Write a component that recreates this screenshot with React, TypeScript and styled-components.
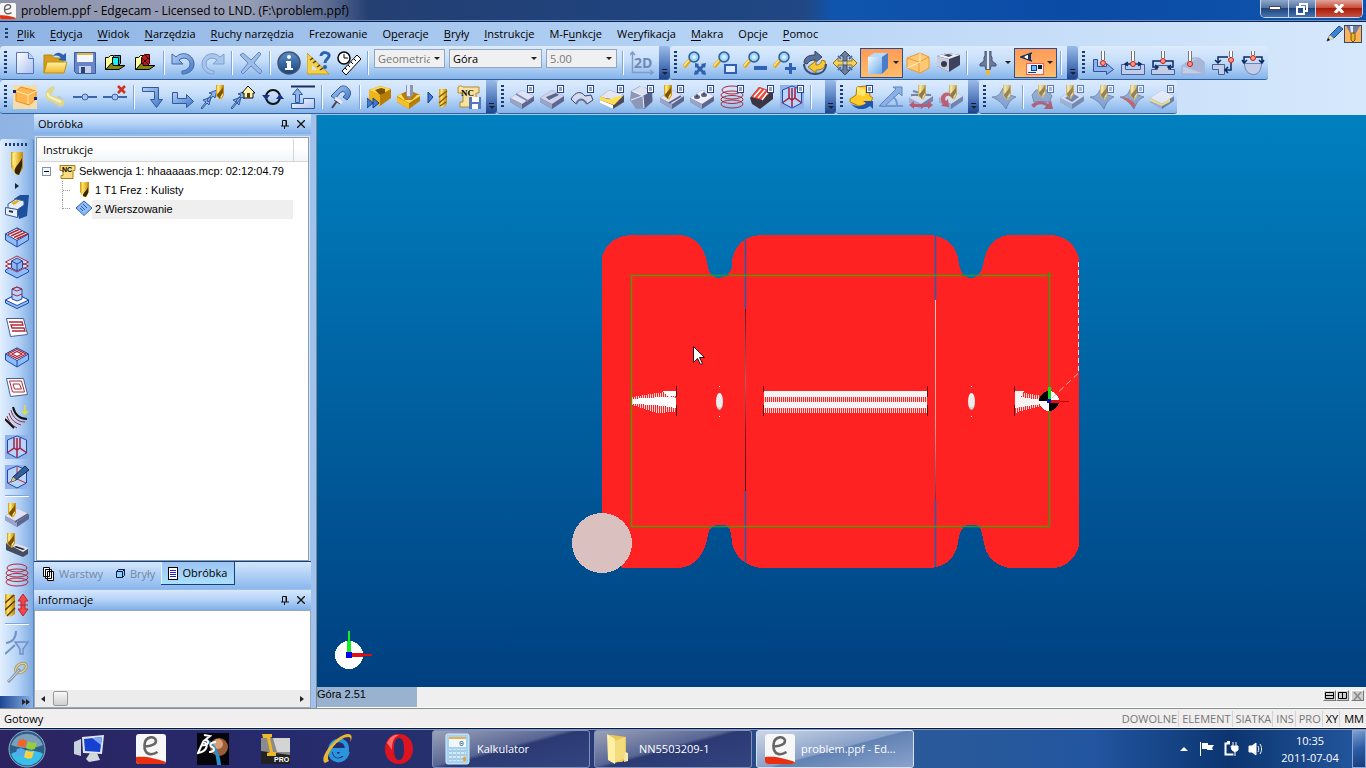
import React from 'react';
import styled, { createGlobalStyle } from 'styled-components';

const ui = `"Open Sans", "Noto Sans", sans-serif`;
const navy = '#17407c';

const GlobalStyle = createGlobalStyle`
  *, *::before, *::after { box-sizing: border-box; }
  body { margin: 0; font-family: ${ui}; font-size: 11px; line-height: 16px; color: #000; }
  button, select { font: inherit; color: inherit; margin: 0; padding: 0; border: 0; background: none; }
  ul { list-style: none; margin: 0; padding: 0; }
  h1, h2 { margin: 0; font: inherit; }
  svg { display: block; flex: none; }
`;

/* ---------- icon parts ---------- */

const Badge = () => (
  <g>
    <rect x="17.5" y=".5" width="6" height="7" fill="#fff" stroke="#24418c" />
    <path d="M19 3h3M19 5h3" stroke="#24418c" />
  </g>
);

const Drill = ({ x = 0, y = 0 }: { x?: number; y?: number }) => (
  <g transform={`translate(${x} ${y})`}>
    <path d="M0 0h8v10l-3 5-5-4z" fill="url(#gold)" />
    <path d="M1 11c0-4 5-5 6-10v6c-1 3-3 4-3 7z" fill="#7a5206" />
    <path d="M2 1v7M5 12l2-3" stroke="#fff0a0" />
  </g>
);

const Slab = ({ top = '#dfe2f2' }: { top?: string }) => (
  <g>
    <path d="M0 13L12 5l12 6v5l-12 8-12-7z" fill="#5c6690" />
    <path d="M0 13L12 5l12 6-12 8z" fill={top} />
    <path d="M0 13l12 6v5l-12-7z" fill="#9aa3c8" />
  </g>
);

const Probe = ({ x = 12, y = 13 }: { x?: number; y?: number }) => (
  <g>
    <path d={`M${x} 0V${y - 3}`} stroke="#fff" strokeWidth="2" />
    <path d={`M${x - 1.5} 0V${y - 3}M${x + 1.5} 0V${y - 3}`} stroke="#777" />
    <circle cx={x} cy={y} r="2.5" fill="#ff9a80" stroke="#c81818" />
  </g>
);

const Lens = () => (
  <g>
    <path d="M1 16l6-7" stroke="#e0a818" strokeWidth="4" />
    <path d="M1 15l5-6" stroke="#ffe88a" strokeWidth="1.5" />
    <circle cx="11" cy="6" r="5" fill="url(#lens)" stroke="#2c5fa0" strokeWidth="1.5" />
  </g>
);

const Iso = ({ fill = '#fff' }: { fill?: string }) => (
  <g stroke="#1f49a8">
    <path d="M.5 9L12 3l11.500 6v6L12 22 .5 15z" fill="#8fbcf6" />
    <path d="M.5 9L12 3l11.500 6L12 15.500z" fill={fill} />
    <path d="M12 15.500V22" />
  </g>
);

const CubeCorner = () => (
  <g>
    <rect width="24" height="24" fill="#8fb2ec" />
    <path d="M2.500 5L12 1l9.500 4v13L12 23l-9.500-5z" fill="#b9d3fa" stroke="#1f49a8" />
  </g>
);

const Coil = () => (
  <g fill="none" stroke="#b02838">
    <ellipse cx="12" cy="5" rx="10" ry="4" /><ellipse cx="12" cy="10" rx="11" ry="4" />
    <ellipse cx="12" cy="14.500" rx="11" ry="4" /><ellipse cx="12" cy="19" rx="11" ry="4" />
  </g>
);

const icons: Record<string, React.ReactNode> = {
  new: <><path d="M3.500 1.500h12l5 6v15h-17z" fill="url(#page)" stroke="#5674bd" /><path d="M15.500 1.500v6h5" fill="#c3d5f7" stroke="#5674bd" /></>,
  open: <><path d="M1 22V4h8l2 3h9v4" fill="#d59d20" stroke="#b8860b" /><path d="M4 11h20l-3 11H1z" fill="url(#folder)" stroke="#c08f14" /><path d="M10 5c4-5 8-3 10-1l3-2v8l-8-1 3-2c-2-3-5-3-8-2z" fill="#2e5fa8" /></>,
  save: <><path d="M1.500 1.500h21v21h-19l-2-2z" fill="#6785c9" stroke="#3c59a0" /><path d="M4 2h16v9H4z" fill="#f1f6ff" /><path d="M4 2h16v2H4z" fill="#e9b832" /><path d="M6 15h12v7H6z" fill="#c7d0e4" /><path d="M8 16h4v6H8z" fill="#2b437f" /></>,
  import: <><path d="M2.500 18.500v-12h3l2-2h3v12z" fill="#ffff9c" stroke="#000" /><path d="M9.500 6.500l2-2h6v8l-2 2h-6z" fill="#20b0b4" stroke="#000" /><path d="M9.500 6.500h6v8h-6z" fill="#20f0f4" stroke="#000" /><path d="M3 18.500l5-6h2v2h12l-6 4z" fill="#8a8a10" stroke="#000" /></>,
  importRed: <><path d="M2.500 18.500v-12h3l2-2h3v12z" fill="#ffff9c" stroke="#000" /><path d="M8.500 6.500l3-3h5v9l-2 2h-6z" fill="#c01824" stroke="#300" /><path d="M9 7l6 6m0-6l-6 6M12 4l4 4" stroke="#300" /><path d="M3 18.500l5-6h2v2h12l-6 4z" fill="#8a8a10" stroke="#000" /></>,
  undo: <path d="M1 3v10h11L8 9c5-4 11-1 11 4 0 4-4 7-8 7v3c7 0 12-4 12-10C23 4 12-1 5 6z" fill="url(#steel)" stroke="#3f66a8" />,
  redo: <path d="M23 3v10H12l4-4C11 5 5 8 5 13c0 4 4 7 8 7v3C6 23 1 19 1 13 1 4 12-1 19 6z" fill="#a9c5ec" stroke="#7c9fd2" />,
  del: <path d="M1 4l3-2 8 7 8-8 2 2-7 9 8 8-2 3-9-8-8 8-2-2 7-9z" fill="#9ebce8" stroke="#6488bf" />,
  info: <><circle cx="12" cy="12" r="11" fill="url(#info)" stroke="#44546e" strokeWidth="1.500" /><circle cx="12" cy="6" r="2" fill="#fff" /><path d="M9 10h5v7h2v2H8v-2h2v-5H9z" fill="#fff" /></>,
  measureHelp: <><path d="M0 2l22 21H0z" fill="#f4cf4a" stroke="#c9971c" /><path d="M5 14v5h5z" fill="#d2e6fd" /><path d="M3 9l3-2m0 5l3-2m1 6l3-2m0 5l3-2" stroke="#4a3a10" strokeWidth="1.500" /><path d="M14 5c0-5 9-4 8 0-.5 3-4 3-4 7" fill="none" stroke="#2b62b0" strokeWidth="3" /><circle cx="18" cy="16" r="2" fill="#2b62b0" /></>,
  timer: <><path d="M5 20L20 4l4 4L9 24z" fill="#fff" stroke="#000" /><path d="M8 17l2 2m1-5l2 2m1-5l2 2m1-5l2 2" stroke="#000" /><circle cx="7" cy="7" r="6" fill="#fff" stroke="#000" strokeWidth="1.500" /><path d="M7 3v4h4" fill="none" stroke="#000" /></>,
  twoD: <><path d="M2.500 1v20.500H23M0 4l2.500-3L5 4M20 19l3 2.500-3 2.500" fill="none" stroke="#7f9cc9" strokeWidth="1.500" /><text x="4" y="17" fontSize="14" fontWeight="700" fontFamily="Open Sans" fill="#6f88b5">2D</text></>,
  zoomFit: <><Lens /><path d="M12 12l4 1-1 1 2 2 2-2-1-1 5-1-1 5-1-1-2 2 2 2 1-1 1 5-5-1 1-1-2-2-2 2 1 1-5 1 1-5 1 1 2-2-2-2-1 1z" fill="#2f5fae" /></>,
  zoomBox: <><Lens /><rect x="12" y="14" width="11" height="8" fill="#dfeaff" stroke="#2f5fae" strokeWidth="2" /></>,
  zoomOut: <><Lens /><rect x="11" y="15" width="13" height="4" fill="#2f62b4" /></>,
  zoomIn: <><Lens /><path d="M16 12h3v4h4v3h-4v4h-3v-4h-4v-3h4z" fill="#2f62b4" /></>,
  rotate: <><path d="M1 12C1 6 6 4 12 4V0l7 6-7 6V9c-4 0-6 1-8 4z" fill="#5b7096" stroke="#34435f" /><path d="M22 10c2 7-4 9-9 9v3l-8-6 8-6v4c4 0 5-2 6-5z" fill="#f6c838" stroke="#a67a10" /><path d="M1 13c0 6 5 10 11 10 7 0 11-4 11-10" fill="none" stroke="#3c4d70" strokeWidth="2" /></>,
  pan: <><path d="M12 0l5 5h-3v5h-4V5H7zM12 24l5-5h-3v-5h-4v5H7z" fill="#6e7f9e" stroke="#3d4a66" /><path d="M0 12l5-5v3h5v4H5v3zM24 12l-5-5v3h-5v4h5v3z" fill="#f6d15a" stroke="#8d7120" /><path d="M5 5l3 3M19 5l-3 3M5 19l3-3M19 19l-3-3" stroke="#4c6aa0" strokeWidth="2" /></>,
  cube: <><path d="M2 6l6-4h14l-6 4z" fill="#b4dcff" /><path d="M2 6h14v17H2z" fill="url(#cubeFace)" /><path d="M16 6l6-4v15l-6 6z" fill="#4a7ccc" /></>,
  wire: <><path d="M1 7l13-5 9 4v11l-9 5L1 17z" fill="#ffc874" stroke="#eb9a2c" /><path d="M1 7l12 4 10-5M13 11v11" fill="none" stroke="#ee9c30" /><path d="M14 2v9L1 17" fill="none" stroke="#fff0c8" /></>,
  solid: <><path d="M1 5l10-3 13 2v10l-11 7L1 15z" fill="#3c435c" /><path d="M1 5l10-3 13 2-11 4z" fill="#eef0f8" /><path d="M1 5l12 3v13L1 15z" fill="#c8cde0" /><circle cx="8" cy="13" r="3" fill="#333a50" /><path d="M7 4l5-1 5 1-4 2z" fill="#41485f" /></>,
  spindle: <><path d="M9 0h6v5l1 1v4l4 3v2h-5l-1 4h-4l-1-4H4v-2l4-3V6l1-1z" fill="#6b7a99" stroke="#465474" /><path d="M11 0h2v18h-2z" fill="#dfe6f4" /><path d="M10 19h4v5h-4z" fill="#e9b93c" /></>,
  view: <><path d="M12 2L1 6l11 4" fill="none" stroke="#17315f" strokeWidth="1.500" /><path d="M8 3.500l3-1v7l-3-1z" fill="#17315f" /><path d="M5 5l3-1v4L5 7z" fill="#fff" /><rect x="6.500" y="12.500" width="17" height="11" fill="#e7f3ff" stroke="#ff5a48" /><rect x="11.500" y="14.500" width="5" height="5" fill="#76b7ff" stroke="#1c3a7c" /><rect x="18" y="14" width="4" height="4" fill="#10182c" /><path d="M8 21.500h8" stroke="#1c3a7c" /></>,
  probeL: <><path d="M2.500 8.500h4v7h9v-3l7 6-7 5v-3h-13z" fill="#8fb2e8" stroke="#2b529a" /><Probe x={12} y={12} /></>,
  probePocket: <><path d="M.5 13.500h4v5h15v-5h4v10H.5z" fill="#c3cde8" stroke="#42609c" /><path d="M5 13h14M7 11l-3 2 3 2m10-4l3 2-3 2" stroke="#0c2a60" strokeWidth="1.500" fill="none" /><Probe /></>,
  probeBoss: <><path d="M.5 18.500h6v-4h11v4h6v5H.5z" fill="#c3cde8" stroke="#42609c" /><path d="M10 10H2v6h4m8-6h8v6h-4M4 14l3 2-3 2m16-4l-3 2 3 2" stroke="#0c2a60" strokeWidth="1.500" fill="none" /><Probe y={10} /></>,
  probeAngle: <><path d="M1 15l11-8h6l5 4v12H1z" fill="#c3cde8" stroke="#98a8cc" /><path d="M1 15l17-8 5 4v12z" fill="#a8b6da" /><Probe x={9} y={13} /></>,
  probeCorner: <><path d="M1.500 13.500h12v10h-6v-5h-6z" fill="#c3cde8" stroke="#42609c" /><path d="M17 6H7v6m13 0v7h-5M4 9l3 3 3-3m7 7l-3 3 3 3" stroke="#0c2a60" strokeWidth="1.500" fill="none" /><Probe x={20} y={9} /></>,
  probeRound: <><path d="M3.500 12.500h17c0 6-3 11-8 11s-9-4-9-11z" fill="#c3cde8" stroke="#6a84b8" /><path d="M9 6H3v6m12-6h6v6M1 9l2 3 3-3m12 0l3 3 2-3" stroke="#0c2a60" strokeWidth="1.500" fill="none" /><Probe y={7} /></>,

  part: <><rect width="24" height="24" fill="#f3dcae" /><path d="M3 6l5-4 15 4v8l-7 6-13-4z" fill="#ffb64e" stroke="#ea9020" /><path d="M3 6l12 4 8-4M15 10v9" fill="none" stroke="#fff0c0" /><rect y="5" width="3" height="3" fill="#14206c" /><rect x="21" y="12" width="3" height="3" fill="#14206c" /></>,
  hose: <><path d="M9 13l8-2 5 5-2 6-4 1-8-5z" fill="#b7c5dd" /><path d="M10 1C2 4 0 12 5 15l12 6c5 1 6-6 2-7L8 10l4-7z" fill="#ddd88c" /><path d="M5 8c-1 3 2 4 4 5l9 4" fill="none" stroke="#f5f2c8" strokeWidth="2" /></>,
  node: <><path d="M0 12h24" stroke="#3c66ac" strokeWidth="2" /><circle cx="12" cy="12" r="3" fill="#a9c4ec" stroke="#3c66ac" /></>,
  nodeX: <><path d="M0 12h24" stroke="#3c66ac" strokeWidth="2" /><circle cx="12" cy="12" r="3" fill="#a9c4ec" stroke="#3c66ac" /><path d="M15 1l7 7m0-7l-7 7" stroke="#d03020" strokeWidth="2.500" /></>,
  down: <path d="M1.500 2.500h16v12h4l-6 8-6-8h4v-8h-12z" fill="url(#steel)" stroke="#2f5a9f" />,
  right: <path d="M1.500 7.500h5v6h9v-4l7 7-7 6v-4h-14z" fill="url(#steel)" stroke="#2f5a9f" />,
  toTool: <><path d="M0 23l5-6-3-2 8-3-2 8-2-2-5 6zM6 15l5-6-3-1 8-3-2 8-2-2-5 6z" fill="#8fb2e8" stroke="#2f5a9f" /><Drill x={15} y={0} /></>,
  toHome: <><path d="M0 23l5-6-3-2 8-3-2 8-2-2-5 6zM5 16l5-6-3-1 8-3-2 8-2-2-5 6z" fill="#8fb2e8" stroke="#2f5a9f" /><path d="M11 8l6-7 7 7h-2v5h-9V8z" fill="#fff2b0" stroke="#111" /><path d="M16 8h3v5h-3z" fill="#5a3c10" /></>,
  cycle: <><circle cx="12" cy="12" r="7" fill="none" stroke="#111" strokeWidth="2" /><path d="M1 10h8l-4 5zM15 14h8l-4-5z" fill="#1a2f8c" /></>,
  retract: <><path d="M0 1.500h24" stroke="#15305f" strokeWidth="2" /><path d="M.5 23.500v-5h12v-5h11v10z" fill="url(#page)" stroke="#2f5a9f" /><path d="M4.500 17.500v-8h-3l5-6 5 6h-3v8z" fill="#8fb2e8" stroke="#2f5a9f" /></>,
  hook: <><path d="M2 11L11 2c3-2 6-1 8 1 4 4 3 8-1 12l-4-3c3-3 3-4 1-5-1-1-3 0-4 1l-5 6z" fill="url(#steel)" stroke="#2f5a9f" /><path d="M3 23l5-7" stroke="#445" strokeWidth="2" /><path d="M6 13l7 5" stroke="#e8e8f0" strokeWidth="3" /><path d="M5 15l6 4" stroke="#445" /></>,
  goldBlock: <><path d="M2 5l11-4 11 3v9l-11 8-11-6z" fill="#b87d08" /><path d="M2 5l11-4 11 3-11 6z" fill="#ffd84c" /><path d="M8 5l6-2 4 1v4l-5 2z" fill="#7a5206" /><path d="M2 5l11 5v11L2 15z" fill="#f0b41c" /><path d="M0 13l6 5-6 5zM6 13l6 5-6 5z" fill="#3f78d8" stroke="#17407c" /></>,
  goldTool: <><path d="M0 11l12-6 11 5v6l-11 8L0 17z" fill="#b87d08" /><path d="M0 11l4-2 4 6h7l5-5h3v1l-11 7z" fill="#ffe05c" /><path d="M0 12l12 6v6L0 17z" fill="#f5bf28" /><path d="M9 0h7v10l-4 4-3-4z" fill="#8b96b5" /><path d="M10 0h3v11h-3z" fill="#dfe5f2" /></>,
  toDrill: <><path d="M1 7l5 5-5 6z" fill="#3f78d8" stroke="#17407c" /><path d="M12 4h8v14l-2 4h-6z" fill="url(#gold)" /><path d="M12 12l8-6M12 18l8-7M13 21l6-4" stroke="#8a5c08" strokeWidth="1.500" /></>,
  ncSave: <><path d="M1 2c2-2 4-1 5 0h16v6h-3v14H3v-5h3V8H1z" fill="#f7e2a0" stroke="#b5882c" /><text x="4" y="11" fontSize="9" fontWeight="700" fontFamily="Liberation Serif" fill="#000">NC</text><path d="M12 12h12v12H12z" fill="#5478c0" /><path d="M15 12h7v5h-7zM15 19h6v5h-6z" fill="#fff" /></>,
  slab: <><Slab /><path d="M6 9l12 7" stroke="#8089b0" strokeWidth="2" /><Badge /></>,
  slabSlot: <><Slab top="#cfd3ea" /><path d="M6 12l10-4 3 2-10 5z" fill="#5b648c" /><Badge /></>,
  slabCurve: <><path d="M1 14c5-8 10-8 14-3l6-1 2 5-6 4c-4-6-8-6-11 0z" fill="#d5daec" stroke="#39456f" /><path d="M6 19c3-6 7-6 11 0" stroke="#69749c" strokeWidth="2" fill="none" /><Badge /></>,
  slabGold: <><path d="M0 12l9-7 15 5v7l-11 7L0 18z" fill="#4b4a60" /><path d="M0 12l9-7 15 5-8 5z" fill="#e4e6f2" /><path d="M0 12c5 0 9 5 15 0l8-1-9 9L0 15z" fill="#ffe04c" /><path d="M0 15l13 5v4L0 18z" fill="#fff" /><Badge /></>,
  roundCube: <><path d="M1 6l9-5 12 4 1 11-8 8H6L0 15z" fill="#8d97b8" /><path d="M2 6l9-5 11 5-9 5z" fill="#dde1ee" /><path d="M13 11l9-5v11l-8 7z" fill="#59638c" /><path d="M13 11L2 6M1 15l11-4M13 11l1 12" stroke="#eef" fill="none" /><Badge /></>,
  slabDrill: <><Slab /><path d="M9 18l12-7" stroke="#59638c" strokeWidth="2" /><Drill x={4} y={0} /><Badge /></>,
  holes: <><Slab top="#eceef8" /><ellipse cx="7" cy="12" rx="3" ry="2" fill="#59638c" /><ellipse cx="14" cy="10" rx="3" ry="2" fill="#59638c" /><path d="M7 9v3m7-5v3" stroke="#333" /><Badge /></>,
  coil: <><Coil /><Badge /></>,
  stripes: <><path d="M0 13L9 2l14 5v7l-13 10-8-5z" fill="#3a3644" /><path d="M1 12L9 2l13 4-10 9z" fill="#f04838" /><path d="M4 12l7-8m-3 9l7-8m-3 10l6-8" stroke="#fff" strokeWidth="1.500" /><Badge /></>,
  cornerBadge: <><CubeCorner /><path d="M9 3v10l-7 5M12 3v19M15 3v10l7 5M9 13l3 2 3-2" stroke="#a02040" strokeWidth="1.500" fill="none" /><Badge /></>,
  goldHat: <><path d="M1 14l6-4 1-8 8-1 4 2 1 8 3 2-4 6-10 2L1 17z" fill="#ffc928" stroke="#b07a08" /><path d="M8 2l8 2v7l-8-1z" fill="#ffe870" /><path d="M2 19c6 3 11 3 15-1l-3-2h10v8l-3-3c-6 5-14 4-19-2z" fill="#1f55b0" /><Badge /></>,
  angle: <><path d="M0 21h24" stroke="#7297d0" strokeWidth="2" /><path d="M1 20L17 4l-3-2h9v9l-3-3L5 22z" fill="#8bb0e6" stroke="#6288c4" /><path d="M14 12c3 2 4 5 4 8" fill="none" stroke="#7297d0" strokeWidth="2" /></>,
  clampRed: <g opacity=".7"><Slab /><path d="M2 10h20M4 6l14 4" stroke="#58607c" strokeWidth="2" /><Drill x={9} y={0} /><path d="M0 20l5-4v3h14v-3l5 4-5 4v-2H5v2z" fill="#c03040" /></g>,
  turnRed: <g opacity=".7"><Slab /><Drill x={10} y={0} /><path d="M11 8C3 5-1 14 4 19l-2 2 8 1-1-8-2 2c-2-3 0-6 4-5z" fill="#c03040" /></g>,
  surfFade: <g opacity=".65"><path d="M0 12c6 0 8-3 11-9l4 6 9 3c-5 2-8 6-10 12-3-5-7-9-14-12z" fill="#7791bd" stroke="#4c6592" /><Drill x={11} y={0} /></g>,
  surfRed: <g opacity=".65"><path d="M2 10l4-5h12l4 6-3 6H4z" fill="#7791bd" stroke="#4c6592" /><Drill x={8} y={-2} /><path d="M1 20c6-5 12-5 17-1l3-4 2 9h-9l2-3c-5-3-9-2-12 2z" fill="#b03038" /><Badge /></g>,
  pocketFade: <g opacity=".65"><Slab /><path d="M5 13l7-5 7 4-7 5z" fill="#515b84" /><Drill x={6} y={-1} /><Badge /></g>,
  surfBadge: <g opacity=".65"><path d="M0 12c6 0 8-3 11-9l4 6 9 3c-5 2-8 6-10 12-3-5-7-9-14-12z" fill="#7791bd" stroke="#4c6592" /><Drill x={10} y={0} /><Badge /></g>,
  surfBadgeRed: <g opacity=".65"><path d="M0 12c6 0 8-3 11-9l4 6 9 3c-5 2-8 6-10 12-3-5-7-9-14-12z" fill="#7791bd" stroke="#4c6592" /><path d="M0 12c7 3 11 7 14 12l1-5c-3-4-8-7-15-7z" fill="#d03030" /><Drill x={10} y={0} /><Badge /></g>,
  slabYellow: <g opacity=".75"><Slab top="#eeeef6" /><path d="M0 13l12 6 8-6v4l-8 4-12-5z" fill="#f4e070" /><Badge /></g>,

  drill: <><path d="M6 0h12v16l-4 7-4-1-4-7z" fill="url(#gold)" /><path d="M11 22c-4-4 1-8 5-14l1-2v8c-1 4-2 6-3 9z" fill="#3a2400" /><path d="M8.500 1v12" stroke="#ffe98c" strokeWidth="2" /></>,
  store: <><path d="M9 4l6-4h9l-2 21-8 3z" fill="#1c4f9c" /><path d="M3 9l8-5 8 2v4l-7 5L3 13z" fill="#e4edf9" stroke="#3a5c90" /><path d="M6 8l6-3 3 1-6 4z" fill="#e8b020" /><path d="M.5 12.500l12 2v8l-12-3z" fill="#e7f1fd" stroke="#3a5c90" /><path d="M4 16l4 1" stroke="#333" strokeWidth="2" /></>,
  flat: <><Iso /><path d="M3 9.500l11-5M6 11l11-5M9 12.500l11-5M11.500 14l11-5" stroke="#b02838" strokeWidth="1.500" /></>,
  rough: <><path d="M.5 15L12 9l11.500 6v2L12 23 .5 17z" fill="#8fbcf6" stroke="#1f49a8" /><path d="M.5 7L12 1l11.500 6L12 13zM.5 11L12 5l11.500 6L12 17z" fill="#fff" fillOpacity=".5" stroke="#b02838" /><path d="M6.500 6v7l5.500 3 5.500-3V6L12 3z" fill="#8fb6f0" stroke="#1f49a8" /><path d="M6.500 6L12 9l5.500-3M12 9v7" fill="none" stroke="#1f49a8" /></>,
  boss: <><path d="M.5 15L12 9l11.500 6v3L12 23.500.5 18z" fill="#8fbcf6" stroke="#1f49a8" /><path d="M.5 15L12 9l11.500 6L12 20.500z" fill="#fff" stroke="#1f49a8" /><path d="M7 4v10l5 2 5-2V4l-5-2z" fill="#b9d3fa" stroke="#1f49a8" /><path d="M7 4l5 2 5-2-5-2zM7 9l5 2 5-2" fill="none" stroke="#b02838" /></>,
  zigzag: <><path d="M1.500 3.500h17l4 16-17 2z" fill="#fff" stroke="#4a5f94" /><path d="M4 7h13l1 3H6l1 3h12l1 3H7" fill="none" stroke="#b02838" strokeWidth="1.300" /></>,
  spiral: <><Iso /><path d="M3 9l9-4.500L21 9l-9 4.500zM7 9l5-2.500L17 9l-5 2.500z" fill="none" stroke="#b02838" strokeWidth="1.300" /></>,
  squares: <><path d="M1.500 3.500h17l4 16-17 2z" fill="#fff" stroke="#4a5f94" /><path d="M4.500 6h12l3 11h-12zM8 9h6.500l2 5h-7z" fill="none" stroke="#b02838" /></>,
  scallop: <><path d="M8 2c2 8 7 12 14 12" fill="none" stroke="#111" strokeWidth="2" /><path d="M6 5c2 8 7 12 14 12M4 8c2 7 6 10 12 12M2 11c2 6 5 9 10 12" fill="none" stroke="#a02838" /><path d="M0 14l9 9" stroke="#111" strokeWidth="2" /><path d="M20 0v9m-3-3l3 3 3-3" stroke="#e4e038" strokeWidth="1.500" fill="none" /></>,
  corner: <><CubeCorner /><path d="M9 3v10l-7 5M12 3v19M15 3v10l7 5M9 13l3 2 3-2" stroke="#a02040" strokeWidth="1.500" fill="none" /></>,
  pencil: <><CubeCorner /><path d="M12 2v12l9 4M12 14l-9 4" stroke="#c02838" fill="none" /><path d="M6 17l2-5L20 1l4 4L11 15z" fill="#2f5f9c" stroke="#1a2c4c" /><path d="M6 17l2-5 3 3z" fill="#e8c878" /></>,
  blockDrill: <><Slab /><path d="M10 19l13-8" stroke="#59638c" strokeWidth="2" /><Drill x={3} y={0} /></>,
  slotDrill: <><path d="M1 10l22 5v6l-5 3L1 17z" fill="#454c60" /><path d="M1 10l5-1 18 6-6 4z" fill="#dfe2ee" /><path d="M9 14l9 3 2-1-9-3z" fill="#222" /><Drill x={2} y={0} /></>,
  coilPlain: <Coil />,
  drillDepth: <><path d="M0 1l10 1v19l-5 3-5-3z" fill="url(#gold)" /><path d="M0 10l9-8M0 17l10-9M2 23l8-8" stroke="#5a3a00" strokeWidth="1.500" /><path d="M18 1l5 7h-3v8h3l-5 7-5-7h3V8h-3z" fill="#f04848" stroke="#c02030" /><path d="M13 12h10" stroke="#c02030" /></>,
  filter: <g fill="none" stroke="#7291c8" strokeWidth="2"><path d="M1 12C8 11 11 7 11 0M0 23l10-9" /><path d="M10 11h13l-5 7v5h-3v-5z" fill="#a9c8f2" strokeWidth="1.500" /></g>,
  chain: <g fill="none" stroke="#a89c68" strokeWidth="3"><ellipse cx="16" cy="7" rx="6" ry="4" transform="rotate(-35 16 7)" /><ellipse cx="16" cy="7" rx="6" ry="4" transform="rotate(-35 16 7)" stroke="#e4dc9c" strokeWidth="1" /><path d="M15 8l-8 9-4 4" stroke="#8c96a4" /><path d="M14 9l-7 8-4 3" stroke="#d8dce4" strokeWidth="1" /></g>,
};

const Icon = ({ name, size = 24 }: { name: string; size?: number }) => (
  <svg width={size} height={size} viewBox="0 0 24 24" fill="none" aria-hidden="true">{icons[name]}</svg>
);

const EdgecamLogo = ({ size }: { size: number }) => (
  <svg width={size} height={size} viewBox="0 0 30 30" fill="none" aria-hidden="true">
    <rect width="30" height="30" rx="3" fill="#f7f7f7" />
    <path d="M0 23c10-1 18 1 30 5v0a3 3 0 0 1-3 2H3a3 3 0 0 1-3-3z" fill="#e83010" />
    <path d="M9 12.500C15 12 20 11 20 7 20 2 9 1 8.500 11c-.5 10 7 11 13 7" stroke="#666" strokeWidth="2.600" />
  </svg>
);

const SharedGradients = () => (
  <defs>
    <linearGradient id="page" x2="1" y2="1"><stop stopColor="#fff" /><stop offset="1" stopColor="#a9c0f0" /></linearGradient>
    <linearGradient id="folder" x2="0" y2="1"><stop stopColor="#fff3a0" /><stop offset="1" stopColor="#f0b92c" /></linearGradient>
    <linearGradient id="steel" x2="1" y2="1"><stop stopColor="#b4d0f6" /><stop offset="1" stopColor="#3f74c2" /></linearGradient>
    <linearGradient id="info" x2="0" y2="1"><stop stopColor="#5c90cc" /><stop offset="1" stopColor="#17437e" /></linearGradient>
    <linearGradient id="gold" x2="1" y2="0"><stop stopColor="#d09410" /><stop offset=".3" stopColor="#ffe46a" /><stop offset="1" stopColor="#c08408" /></linearGradient>
    <linearGradient id="cubeFace" x2="1" y2="1"><stop stopColor="#f0faff" /><stop offset="1" stopColor="#6ba8ec" /></linearGradient>
    <radialGradient id="lens"><stop stopColor="#f0fbff" /><stop offset="1" stopColor="#6fb8ec" /></radialGradient>
    <linearGradient id="shine" x2="0" y2="1"><stop stopColor="#fff" /><stop offset="1" stopColor="#d0d0d0" /></linearGradient>
    <linearGradient id="edgeLeft" gradientUnits="userSpaceOnUse" x1="0" y1="309" x2="0" y2="491"><stop stopColor="#502030" /><stop offset=".4" stopColor="#a86468" /><stop offset=".7" stopColor="#801018" /><stop offset="1" stopColor="#400810" /></linearGradient>
    <linearGradient id="edgeRight" gradientUnits="userSpaceOnUse" x1="0" y1="300" x2="0" y2="500"><stop stopColor="#f0c8c8" /><stop offset=".6" stopColor="#dca0a0" /><stop offset="1" stopColor="#703848" /></linearGradient>
    <pattern id="comb" patternUnits="userSpaceOnUse" width="2" height="4"><rect width="1" height="4" fill="#f4dcdc" /></pattern>
  </defs>
);

/* ---------- window frame ---------- */

const Window = styled.div`
  display: flex; flex-direction: column; min-height: 100vh;
  background: linear-gradient(90deg, #8fb4e4, #b4d2f4 50%, #d6e8fc);
`;

const TitleBar = styled.header`
  display: flex; align-items: center; height: 22px; color: #000;
  background: linear-gradient(90deg, #8f93ac 0, #98a0b8 18%, #5d6d92 24%, #243f72 27%, #1f4480 50%, #214884 59%, #0f55ae 61%, #0a4ba6 78%, #0e54ac 100%);
  border-bottom: 1px solid #0e2450; box-shadow: inset 0 -1px #6d8fc4;
  h1 { flex: 1; padding-left: 5px; font-size: 12px; white-space: nowrap; }
`;

const Caption = styled.div`
  display: flex; align-self: flex-start; height: 18px; margin-right: 3px;
  border: 1px solid #c6d6ee; border-top: 0; border-radius: 0 0 5px 5px; overflow: hidden;
`;

const CaptionButton = styled.button<{ $close?: boolean }>`
  display: grid; place-items: center; width: ${p => (p.$close ? 47 : 27)}px;
  background: ${p => (p.$close ? 'linear-gradient(#e0a49c, #c8503c 45%, #a81c0c 50%, #c8503c)' : 'linear-gradient(#8fa8cc, #54759f 45%, #1e4580 50%, #4673ac)')};
  & + & { border-left: 1px solid #c6d6ee; }
`;

const MenuBar = styled.nav`
  display: flex; align-items: center; height: 24px; padding: 0 4px 0 5px;
`;

const MenuItem = styled.button`
  padding: 0 7px 0 8px; line-height: 20px; white-space: nowrap;
  u { text-underline-offset: 2px; }
`;

const Spacer = styled.div`flex: 1;`;

const Grip = styled.span<{ $across?: boolean }>`
  flex: none; align-self: center;
  ${p => p.$across
    ? 'width: 24px; height: 3px; margin: 4px 0 3px; background: repeating-linear-gradient(90deg, #1c3c74 0 2px, transparent 2px 4px);'
    : 'width: 3px; height: 24px; margin: 0 3px 0 4px; background: repeating-linear-gradient(#1c3c74 0 2px, transparent 2px 4px);'}
`;

const MenuGrip = styled(Grip)`height: 12px; margin: 0 1px 0 0;`;

const ToolRow = styled.div`display: flex; height: 34px;`;

const ToolGroup = styled.div`
  display: flex; align-items: center; height: 34px; border-radius: 4px 4px 3px 3px;
  background: linear-gradient(#dcebfd, #c6defa 45%, #84b4ea); border-bottom: 1px solid #35609c;
`;

const ToolButton = styled.button<{ $on?: boolean; $menu?: boolean }>`
  display: flex; align-items: center; justify-content: ${p => (p.$menu ? 'space-between' : 'center')};
  width: ${p => (p.$menu ? 43 : 30)}px; height: 30px; flex: none;
  ${p => p.$menu && 'padding: 0 3px 0 5px;'}
  ${p => p.$on && 'background: linear-gradient(#ff9a58, #ffbd6a); border: 1px solid #274f94;'}
`;

const Arrow = styled.i<{ $dir?: 'right' | 'left' }>`
  width: 0; height: 0; border: 3px solid transparent; flex: none;
  ${p => p.$dir === 'right' ? 'border-left: 4px solid #222; border-right: 0;'
    : p.$dir === 'left' ? 'border-right: 4px solid #222; border-left: 0;'
    : 'border-top: 3px solid #222; border-bottom: 0;'}
`;

const Separator = styled.span<{ $across?: boolean }>`
  flex: none; align-self: center;
  ${p => p.$across
    ? 'width: 24px; height: 2px; margin: 3px 0; border-top: 1px solid #7ea6dc; border-bottom: 1px solid #fff;'
    : 'width: 2px; height: 24px; margin: 0 3px; border-left: 1px solid #7ea6dc; border-right: 1px solid #fff;'}
`;

const Overflow = styled.button<{ $gap?: number }>`
  display: flex; flex-direction: column; align-items: center; justify-content: flex-end; gap: 2px;
  width: 11px; height: 33px; margin-left: ${p => p.$gap ?? 2}px; padding-bottom: 4px; flex: none;
  background: linear-gradient(#9bbbe8, #5c84c4 50%, #1c4490); border-radius: 0 3px 3px 0;
  &::before { content: ''; width: 5px; height: 1px; background: #0b1c3c; }
`;

const Combo = styled.label<{ $width: number; $muted?: boolean }>`
  position: relative; width: ${p => p.$width}px; margin: 0 2px; align-self: flex-start; margin-top: 3px;
  select {
    appearance: none; width: 100%; height: 19px; padding: 0 14px 0 3px; line-height: 15px; opacity: 1;
    background: #f0f0f0; border: 1px solid #93a5c0; border-radius: 0; color: ${p => (p.$muted ? '#777' : '#000')};
  }
  i { position: absolute; right: 5px; top: 8px; pointer-events: none; }
`;

/* ---------- docked panels ---------- */

const Body = styled.main`display: flex; flex: 1; min-height: 0;`;

const SideBar = styled.div`
  display: flex; flex-direction: column; align-items: center; width: 34px; margin-top: 25px; flex: none;
  background: linear-gradient(90deg, #e2effe, #b4d2f6 55%, #7eaae0); border-right: 1px solid #5b87c4; border-radius: 3px 3px 0 0;
`;

const SideMore = styled.button`
  display: flex; justify-content: flex-end; align-items: center; width: 100%; height: 12px; margin-top: auto; padding-right: 3px;
  background: linear-gradient(90deg, #1c4794, #8db3e8);
`;

const SideArrow = styled.button`display: grid; place-items: center; width: 24px; height: 13px;`;

const Dock = styled.aside`display: flex; flex-direction: column; width: 277px; margin-right: 5px; flex: none;`;

const PanelTitle = styled.div`
  display: flex; align-items: center; height: 20px; padding: 0 2px 0 4px; flex: none;
  background: linear-gradient(#d6e8fd, #b3d2f7 50%, #80b0ea);
  h2 { flex: 1; }
  button { width: 16px; height: 16px; display: grid; place-items: center; }
`;

const TreeFrame = styled.div`
  display: flex; flex-direction: column; flex: 1; margin: 3px 2px 0 2px; border: 1px solid #8b9bb0; background: #fff;
  font-family: "Liberation Sans", sans-serif; outline: 1px solid #cfe8ee;
`;

const TreeHeader = styled.div`
  display: flex; align-items: center; height: 24px; font-family: ${ui};
  background: linear-gradient(#fff 45%, #f2f4f6); border-bottom: 1px solid #d5d5d5;
  span { flex: 1; padding-left: 6px; }
  i { width: 15px; height: 22px; border-left: 1px solid #d5d5d5; }
`;

const TreeRow = styled.div<{ $level: number }>`
  display: flex; align-items: center; height: 19px; padding-left: ${p => (p.$level ? 25 : 5)}px; margin-right: 15px; line-height: 19px;
`;

const TreeLabel = styled.span<{ $selected?: boolean }>`
  flex: 1; padding-left: 3px; white-space: nowrap; ${p => p.$selected && 'background: #efefef;'}
`;

const Tabs = styled.div`
  display: flex; height: 28px; padding: 0 0 4px 3px; border-top: 1px solid ${navy}; margin-bottom: 1px;
  background: linear-gradient(#d3e6fc, #8ab7ee);
`;

const Tab = styled.button<{ $active?: boolean }>`
  display: flex; align-items: center; gap: 4px; padding: 0 ${p => (p.$active ? 7 : 6)}px; color: ${p => (p.$active ? '#000' : '#7288a6')};
  ${p => p.$active && `background: linear-gradient(#9cc4f2, #ace0fc); border: 1px solid ${navy}; border-width: 0 1px 1px 0; box-shadow: inset 1px 0 #e0f4ff;`}
`;

const InfoBox = styled.div`
  display: flex; flex-direction: column; justify-content: flex-end; height: 98px; background: #fff; border: 1px solid #9aa8b8;
`;

const ScrollBar = styled.div`
  display: flex; align-items: center; height: 17px; padding: 0 6px 0 6px; background: #ececec;
`;

const Thumb = styled.button`
  width: 15px; height: 15px; margin-left: 8px; border: 1px solid #999; border-radius: 2px; background: linear-gradient(#f8f8f8, #cfcfcf);
`;

/* ---------- graphics area ---------- */

const ViewColumn = styled.section`
  display: flex; flex-direction: column; flex: 1; min-width: 0; margin-top: 1px; border-left: 1px solid #7c8894;
`;

const Scene = styled.div`
  flex: 1 1 0; min-height: 0; background: linear-gradient(#0080c0, #004080);
  svg { width: 100%; height: 100%; }
`;

const ViewFooter = styled.div`
  display: flex; height: 21px; padding-right: 2px; background: #efefef; border-bottom: 1px solid #fff;
`;

const ViewTab = styled.button`
  width: 100px; height: 20px; padding-bottom: 6px; line-height: 14px; text-align: left; background: #98b2d0;
  font-family: "Liberation Sans", sans-serif;
`;

const TinyButton = styled.button`
  display: grid; place-items: center; width: 13px; height: 11px; margin-top: 3px; border: 1px solid; border-color: #fff #777 #777 #fff; background: #d0d0d0;
  &:last-child { margin-left: 2px; }
`;

/* ---------- status bar and taskbar ---------- */

const StatusBar = styled.footer`
  display: flex; align-items: center; height: 20px; padding: 2px 0 0 4px; background: #f0eeee; border-top: 1px solid #84908c; border-bottom: 1px solid #fff;
`;

const StatusCell = styled.span<{ $on?: boolean }>`
  padding: 0 1px 0 3px; border-left: 1px solid #d4d4d4; color: ${p => (p.$on ? '#000' : '#777')};
  &:first-of-type { border-left: 0; }
  &:last-child { padding-left: 4px; padding-right: 2px; }
`;

const TaskBar = styled.nav`
  display: flex; align-items: center; height: 40px; color: #fff; padding-left: 6px;
  background: linear-gradient(90deg, #2c2460 0, #262a6c 20%, #26356f 40%, #2b5a98 66%, #2256a0 80%, #0c3570 90%, #2458a0 100%);
  border-top: 1px solid #0a1838; box-shadow: inset 0 1px #7d97c8;
`;

const Launcher = styled.button`display: grid; place-items: center; width: 62px; height: 38px; flex: none;`;
const StartButton = styled(Launcher)`width: 42px; margin-right: 10px;`;

const Tasks = styled.div`display: flex; flex: 0 1 488px; min-width: 0; padding-left: 2px;`;

const Task = styled.button<{ $active?: boolean }>`
  display: flex; align-items: center; gap: ${p => (p.$active ? 6 : 4)}px; flex: 0 1 158px; height: 38px; margin-right: 4px; padding: 0 10px 0 8px;
  border: 1px solid ${p => (p.$active ? '#d5e2f4' : '#7f92bc')}; border-radius: 3px; text-align: left; white-space: nowrap;
  background: ${p => (p.$active
    ? 'linear-gradient(165deg, #c6d1e4 5%, #88a0c8 50%, #6182b4 52%, #8aa3cc)'
    : 'linear-gradient(165deg, #9ba1b8 0, #5a6794 45%, #2c3a74 50%, #33447e)')};
`;

const Tray = styled.div`
  display: flex; align-items: center; gap: 9px; margin-left: auto;
  button { display: grid; place-items: center; min-width: 12px; height: 24px; }
`;

const Clock = styled.time`width: 64px; text-align: center; line-height: 17px; white-space: nowrap; margin: 0 1px 0 6px;`;

const ShowDesktop = styled.button`
  && { width: 14px; height: 38px; border: 1px solid #8ba6d0; background: linear-gradient(160deg, #7f9fd0, #2b5ca4 50%, #153c7c); }
`;

/* ---------- content ---------- */

const menus = ['_Plik', '_Edycja', '_Widok', '_Narzędzia', '_Ruchy narzędzia', 'Frezowanie', 'O_peracje', '_Bryły', '_Instrukcje', 'M-F_unkcje', 'We_ryfikacja', '_Makra', 'Opcje', '_Pomoc'];

const Mnemonic = ({ text }: { text: string }) => {
  const at = text.indexOf('_');
  if (at < 0) return <>{text}</>;
  return <>{text.slice(0, at)}<u>{text[at + 1]}</u>{text.slice(at + 2)}</>;
};

const Tools = ({ names, across }: { names: string; across?: boolean }) => (
  <>{names.split(' ').map((n, i) => (n === '|' ? <Separator $across={across} key={i} /> : <ToolButton key={i} aria-label={n}><Icon name={n} /></ToolButton>))}</>
);

const More = ({ gap }: { gap?: number }) => <Overflow $gap={gap} aria-label="Więcej"><Arrow /></Overflow>;

const PanelHead = ({ title }: { title: string }) => (
  <PanelTitle>
    <h2>{title}</h2>
    <button aria-label="Przypnij"><svg width="8" height="9" fill="none" stroke="#111"><path d="M1.500 6V.500h4V6M5 1v5M0 6h8M3.500 6v3" /></svg></button>
    <button aria-label="Zamknij"><svg width="8" height="8" fill="none" stroke="#111" strokeWidth="1.300"><path d="M0 0l8 8M8 0L0 8" /></svg></button>
  </PanelTitle>
);

const Toolpath = () => (
  <svg viewBox="317 115 1049 572" fill="none" role="img" aria-label="Ścieżka narzędzia">
    <SharedGradients />
    <path
      fill="#ff2222"
      shapeRendering="crispEdges"
      d="M602 257Q608 237 630 235H680Q700 237 706 258L708 267Q710 278 719 278Q730 277 732 266V260Q737 237 760 235H930Q953 237 958 258L960 268Q963 278 971 278Q982 277 984 260Q989 237 1009 235H1053Q1073 238 1079 258V546Q1073 565 1055 568H1009Q987 563 984 543L982 533Q980 525 974 525H967Q959 528 958 543Q954 565 932 568H760Q737 564 732 543L731 533Q729 525 723 525H716Q708 527 707 540Q701 565 680 568H622L602 540Z"
    />
    <path d="M745.500 240v69M745.500 491v72M935.500 236v64M935.500 500v67" stroke="#1f5fb0" strokeWidth="1.500" />
    <rect x="745" y="309" width="1" height="182" fill="url(#edgeLeft)" />
    <rect x="935" y="300" width="1" height="200" fill="url(#edgeRight)" />
    <g shapeRendering="crispEdges">
      <path d="M632 397l24-4 20-2v21l-20 1-24-8z" fill="url(#comb)" />
      <path d="M632 399l44-3v-5h-14l6 5 8 2v10l-20-3-24-1z" fill="#fff" />
      <path d="M764 391h163v6H764zM764 402h163v6H764z" fill="#f4f4f4" />
      <path d="M764 397h163v5H764zM764 408h163v5H764z" fill="url(#comb)" />
      <path d="M1015 391l16 3 10 2v10l-16 4-10 3z" fill="url(#comb)" />
      <path d="M1015 391h9l-3 6 20 3v4l-26 4z" fill="#f4f4f4" />
    </g>
    <path d="M676.500 386v11m0 8v11M763.500 386v6m0 13v11M927.500 386v11m0 8v11M1014.500 386v6m0 13v11" stroke="#5c1010" />
    <path d="M1049 275.500H631.500v251H1049" stroke="#5c9408" strokeWidth="1.500" />
    <path d="M1049.500 272v255" stroke="#3f9410" strokeWidth="1.500" />
    <path d="M1046 275.500h7" stroke="#3f9410" />
    <path d="M709 275.500h21M961 275.500h21M709 526.500h21M961 526.500h21" stroke="#109a58" />
    <ellipse cx="719.500" cy="401.500" rx="3.500" ry="8.500" fill="url(#shine)" />
    <ellipse cx="971.500" cy="401.500" rx="3.500" ry="8.500" fill="url(#shine)" />
    <path d="M717 396h5v11h-5zM969 396h5v11h-5z" fill="#ececec" />
    <path d="M719 386.500h1M719 416.500h1M971 386.500h1M971 416.500h1" stroke="#fff" />
    <g shapeRendering="crispEdges">
      <circle cx="602" cy="543" r="30" fill="#dac1bf" />
      <path d="M1078.500 262v111" stroke="#e4dce8" strokeDasharray="5 3" />
      <circle cx="1049" cy="401" r="10" fill="#fff" />
      <path d="M1049 401v-10a10 10 0 0 0-10 10zM1049 401v10a10 10 0 0 0 10-10z" fill="#000" />
      <path d="M1049.500 387v14" stroke="#10e020" strokeWidth="3" />
      <path d="M1050 401.500h10" stroke="#e01010" strokeWidth="3" />
      <path d="M1060 401.500h9" stroke="#c00000" />
      <rect x="1047" y="399" width="4" height="4" fill="#1010c0" />
      <circle cx="349" cy="655" r="14" fill="#fff" />
      <path d="M348 631h2v10h-2z M347 641h4v11h-4z" fill="#10f020" />
      <path d="M352 653h11v1h9v2h-9v1h-11z" fill="#e01010" />
      <rect x="346" y="652" width="6" height="6" fill="#0000f0" />
    </g>
    <path d="M1078 373.500L1051 399" stroke="#f8b8b0" strokeDasharray="6 4" />
    <path d="M693.500 346.500v16l4-4 3 6 2-1-3-6h5z" fill="#fff" stroke="#301018" />
  </svg>
);

const StartOrb = () => (
  <svg width="38" height="38" viewBox="0 0 38 38" aria-hidden="true">
    <circle cx="19" cy="19" r="18" fill="#2b5e88" stroke="#8fb0cc" />
    <path d="M3 24a17 17 0 0 0 32 0c-8-5-22-5-32 0z" fill="#38c0e8" />
    <path d="M3 15a17 17 0 0 1 32 0c-8 4-22 4-32 0z" fill="#9dbcd2" opacity=".7" />
    <path d="M11 10c3-1 5-1 8 1l-2 7c-3-2-5-2-8-1z" fill="#f0642c" />
    <path d="M20 11c3 2 5 2 9 1l-2 7c-3 1-6 1-9-1z" fill="#98cc40" />
    <path d="M9 19c3-1 5-1 8 1l-2 7c-3-2-5-2-8-1z" fill="#58a8ec" />
    <path d="M18 20c3 2 5 2 8 1l-2 7c-3 1-5 1-8-1z" fill="#fcd040" />
  </svg>
);

const launchers: [string, React.ReactNode][] = [
  ['Komputer', <svg width="32" height="30" viewBox="0 0 32 30"><path d="M1 8l7-3v17l-7-2z" fill="#c8d4dc" /><path d="M9 3l22-2-2 19-19-1z" fill="#dfe6ee" /><path d="M11 5l18-2-2 15-15-1z" fill="#1640d0" /><path d="M19 4l10-1-1 8z" fill="#7fa8f8" /><path d="M17 19h7l3 7-11 2-3-3z" fill="#d4d8dc" /></svg>],
  ['Edgecam', <EdgecamLogo size={30} />],
  ['3DS', <svg width="32" height="32" viewBox="0 0 32 32" fill="none"><rect width="32" height="32" fill="#05060c" /><circle cx="22" cy="14" r="9" fill="#9c5c38" /><circle cx="21" cy="11" r="5" fill="#d8a078" /><path d="M10 6c9 5 13 15 14 26h-4C19 20 16 12 8 8z" fill="#2a90c8" /><path d="M7 2l6 1-5 4c5 0 4 6-3 5M1 20L6 9c6 1 5 9-5 11zM19 9c-6 0-7 4-4 5s3 5-3 5" stroke="#fff" strokeWidth="2" /></svg>],
  ['Inventor', <svg width="32" height="32" viewBox="0 0 32 32"><rect x="2" y="5" width="29" height="26" fill="#8a8a8a" /><path d="M14 5h17v14H18z" fill="#d4d4d4" /><path d="M2 18l29 4v9H2z" fill="#222" /><path d="M3 1h10v3l-2 1 3 14h3v4H8v-3l3-1L8 5H4z" fill="#eeb828" /><text x="15" y="29" fontSize="7" fontWeight="700" fontFamily="Liberation Sans" fill="#fff">PRO</text></svg>],
  ['Internet Explorer', <svg width="32" height="32" viewBox="0 0 32 32" fill="none"><path d="M10 17h16c1-13-17-13-17 1 0 12 14 12 17 3h-6c-2 3-6 2-6-2" stroke="#2a94dc" strokeWidth="4" /><path d="M4 30C-3 26 14 2 27 1c5 0 4 5 2 8 1-3 1-5-2-5C18 4 3 22 8 28z" fill="#e8b830" /></svg>],
  ['Opera', <svg width="32" height="32" viewBox="0 0 32 32"><path fillRule="evenodd" d="M16 1c9 0 14 7 14 15s-5 15-14 15S2 24 2 16 7 1 16 1zm0 4c-4 0-5 5-5 11s1 11 5 11 5-5 5-11-1-11-5-11z" fill="#dc1420" /><path d="M4 10C7 3 12 1 16 2c-6 2-7 8-7 15z" fill="#ff6a68" /></svg>],
];

const Calculator = () => (
  <svg width="32" height="32" viewBox="0 0 32 32"><rect x="5" y="1" width="23" height="30" rx="2" fill="#a4d2f0" stroke="#d8effc" /><rect x="8" y="4" width="17" height="10" fill="#eef8fc" /><path d="M8 4h17v2H8z" fill="#f0b048" /><text x="18" y="13" fontSize="8" fontFamily="Liberation Mono" fill="#1c4c74">0</text><path d="M8 18h17M8 22h17M8 26h17" stroke="#fff" strokeWidth="3" strokeDasharray="3 1" /><path d="M8 18h17M8 22h17M8 26h17" stroke="#4c94c4" strokeDasharray="3 1" /><rect x="22" y="24" width="3" height="4" fill="#f0a030" /></svg>
);

const Folder = () => (
  <svg width="32" height="32" viewBox="0 0 32 32"><path d="M5 2h4l14 2v22l-4 3H8z" fill="#e8c858" /><path d="M4 1l8 5v25l-7-4z" fill="#fff0a4" /><path d="M12 8l10-4v21l-10 5z" fill="#f4dc7c" /><path d="M22 19l3 1v8l-4 1z" fill="#f6eab0" /></svg>
);

export default function App() {
  return (
    <>
      <GlobalStyle />
      <Window>
        <TitleBar>
          <EdgecamLogo size={16} />
          <h1>problem.ppf - Edgecam - Licensed to LND. (F:\problem.ppf)</h1>
          <Caption>
            <CaptionButton aria-label="Minimalizuj"><svg width="12" height="5"><rect x=".5" y=".5" width="11" height="3" fill="#fff" stroke="#445" /></svg></CaptionButton>
            <CaptionButton aria-label="Przywróć"><svg width="12" height="12" fill="none" stroke="#fff" strokeWidth="2"><path d="M4 4V1h7v7H8" /><rect x="1" y="4" width="7" height="7" /></svg></CaptionButton>
            <CaptionButton $close aria-label="Zamknij okno"><svg width="10" height="9" fill="none" stroke="#fff" strokeWidth="3"><path d="M1 0l8 9M9 0L1 9" /></svg></CaptionButton>
          </Caption>
        </TitleBar>

        <MenuBar>
          <MenuGrip />
          {menus.map(m => <MenuItem key={m}><Mnemonic text={m} /></MenuItem>)}
          <Spacer />
          <svg width="18" height="18" viewBox="0 0 18 18"><path d="M1 16l3-6L13 1l4 3-9 9z" fill="#3f82d8" stroke="#204c8c" /><path d="M1 16l3-6 4 4z" fill="#f0d8a8" /><path d="M1 16l1-3 2 2z" /></svg>
          <svg width="18" height="18" viewBox="0 0 18 18"><rect x=".5" y=".5" width="17" height="17" fill="#ffb45c" stroke="#334a70" /><path d="M2 1h14l-4 7H6z" fill="#6e7ea4" /><path d="M6 1h3v7H7z" fill="#e4eaf8" /><path d="M7 8h4v7l-2 2-2-2z" fill="#e8b428" stroke="#7c5400" /></svg>
        </MenuBar>

        <ToolRow>
          <ToolGroup>
            <Grip />
            <Tools names="new open save import importRed | undo redo | del | info measureHelp timer |" />
            <Combo $width={71} $muted><select aria-label="Typ" disabled><option>Geometria</option></select><Arrow /></Combo>
            <Combo $width={93}><select aria-label="Widok"><option>Góra</option></select><Arrow /></Combo>
            <Combo $width={71} $muted><select aria-label="Skok" disabled><option>5.00</option></select><Arrow /></Combo>
            <Tools names="| twoD" />
            <More />
          </ToolGroup>
          <ToolGroup>
            <Grip />
            <Tools names="zoomFit zoomBox zoomOut zoomIn rotate pan" />
            <ToolButton $on $menu aria-label="Cieniowanie"><Icon name="cube" /><Arrow /></ToolButton>
            <Tools names="wire solid |" />
            <ToolButton $menu aria-label="Wrzeciono"><Icon name="spindle" /><Arrow /></ToolButton>
            <ToolButton $on $menu aria-label="Widoczność"><Icon name="view" /><Arrow /></ToolButton>
            <Separator />
            <More />
          </ToolGroup>
          <ToolGroup>
            <Grip />
            <Tools names="probeL probePocket probeBoss probeAngle probeCorner probeRound" />
          </ToolGroup>
        </ToolRow>

        <ToolRow>
          <ToolGroup>
            <Grip />
            <Tools names="part hose node nodeX | down right toTool toHome cycle retract | hook | goldBlock goldTool toDrill ncSave" />
            <More />
          </ToolGroup>
          <ToolGroup>
            <Grip />
            <Tools names="slab slabSlot slabCurve slabGold roundCube slabDrill holes coil stripes cornerBadge |" />
            <More gap={10} />
          </ToolGroup>
          <ToolGroup>
            <Grip />
            <Tools names="goldHat angle clampRed turnRed" />
            <More />
          </ToolGroup>
          <ToolGroup>
            <Grip />
            <Tools names="surfFade | surfRed pocketFade surfBadge surfBadgeRed slabYellow" />
          </ToolGroup>
        </ToolRow>

        <Body>
          <SideBar>
            <Grip $across />
            <Tools across names="drill" />
            <SideArrow aria-label="Rozwiń"><Arrow $dir="right" /></SideArrow>
            <Tools across names="store flat rough boss zigzag spiral squares scallop corner pencil | blockDrill slotDrill coilPlain drillDepth | filter chain" />
            <SideMore aria-label="Więcej narzędzi"><Arrow $dir="right" /><Arrow $dir="right" /></SideMore>
          </SideBar>

          <Dock>
            <PanelHead title="Obróbka" />
            <TreeFrame>
              <TreeHeader><span>Instrukcje</span><i /></TreeHeader>
              <ul>
                <li>
                  <TreeRow $level={0}>
                    <svg width="9" height="9"><rect x=".5" y=".5" width="8" height="8" fill="#f4f8fc" stroke="#7f94ac" /><path d="M2 4.500h5" stroke="#000" /></svg>
                    <svg width="25" height="16" viewBox="0 0 25 16"><path d="M9 1.500h15v5h-2v8H10v-3h2v-5H9z" fill="#f8dc80" stroke="#a87c1c" /><text x="11" y="8" fontSize="7" fontWeight="700" fontFamily="Liberation Sans">NC</text></svg>
                    <TreeLabel>Sekwencja 1: hhaaaaas.mcp: 02:12:04.79</TreeLabel>
                  </TreeRow>
                  <ul>
                    <li>
                      <TreeRow $level={1}>
                        <svg width="30" height="19" viewBox="0 0 30 19"><path d="M.5 0v19M1 9.500h8" stroke="#999" strokeDasharray="1 1" /><path d="M18 1h9v10l-3 5h-3l-3-5z" fill="url(#gold)" /><path d="M21 15c0-4 4-5 5-9v6l-2 4z" fill="#3a2400" /></svg>
                        <TreeLabel>1 T1 Frez : Kulisty</TreeLabel>
                      </TreeRow>
                    </li>
                    <li>
                      <TreeRow $level={1}>
                        <svg width="30" height="19" viewBox="0 0 30 19"><path d="M.5 0v9M1 8.500h8" stroke="#999" strokeDasharray="1 1" /><path d="M22 1l8 7-8 7.500L14 8z" fill="#8fbcf4" stroke="#2b62b4" /><path d="M19 6l4 4m-2-6l4 4m-7 0l3 3" stroke="#2b62b4" /></svg>
                        <TreeLabel $selected>2 Wierszowanie</TreeLabel>
                      </TreeRow>
                    </li>
                  </ul>
                </li>
              </ul>
            </TreeFrame>
            <Tabs>
              <Tab><svg width="12" height="14" fill="#fff" stroke="#000"><path d="M.5.500h6v9h-6zM2.500 2.500h6v9h-6zM4.500 4.500h6v9h-6z" /></svg>Warstwy</Tab>
              <Tab><svg width="11" height="11" stroke="#101850"><path d="M1.500 3.500l2-2h6v6l-2 2h-6z" fill="#8fd0f0" /><path d="M1.500 3.500h6v6m0-6l2-2" fill="none" /></svg>Bryły</Tab>
              <Tab $active><svg width="10" height="13"><rect x=".5" y=".5" width="9" height="12" fill="#fff" stroke="#000" /><path d="M2 3.500h6M2 5.500h6M2 7.500h6M2 9.500h6" stroke="#2020c0" /></svg>Obróbka</Tab>
            </Tabs>
            <PanelHead title="Informacje" />
            <InfoBox>
              <ScrollBar><Arrow $dir="left" /><Thumb aria-label="Przewiń" /><Spacer /><Arrow $dir="right" /></ScrollBar>
            </InfoBox>
          </Dock>

          <ViewColumn>
            <Scene><Toolpath /></Scene>
            <ViewFooter>
              <ViewTab>Góra 2.51</ViewTab>
              <Spacer />
              <TinyButton aria-label="Podziel poziomo"><svg width="9" height="7" fill="none" stroke="#000"><path d="M.5.500h8v6h-8zM0 3.500h9" /></svg></TinyButton>
              <TinyButton aria-label="Podziel pionowo"><svg width="9" height="7" fill="none" stroke="#000"><path d="M.5.500h8v6h-8zM4.500 0v7" /></svg></TinyButton>
              <TinyButton aria-label="Zamknij widok"><svg width="9" height="8" fill="none" stroke="#888" strokeWidth="1.500"><path d="M1 0l7 8M8 0L1 8" /></svg></TinyButton>
            </ViewFooter>
          </ViewColumn>
        </Body>

        <StatusBar>
          Gotowy
          <Spacer />
          {['DOWOLNE', 'ELEMENT', 'SIATKA', 'INS', 'PRO', 'XY', 'MM'].map(s => <StatusCell key={s} $on={s === 'XY' || s === 'MM'}>{s}</StatusCell>)}
        </StatusBar>

        <TaskBar>
          <StartButton aria-label="Start"><StartOrb /></StartButton>
          {launchers.map(([n, svg]) => <Launcher key={n} aria-label={n}>{svg}</Launcher>)}
          <Tasks>
            <Task><Calculator />Kalkulator</Task>
            <Task><Folder />NN5503209-1</Task>
            <Task $active><EdgecamLogo size={30} />problem.ppf - Ed...</Task>
          </Tasks>
          <Tray>
            <button aria-label="Ukryte ikony"><svg width="8" height="4"><path d="M0 4l4-4 4 4z" fill="#fff" /></svg></button>
            <button aria-label="Centrum akcji"><svg width="16" height="16" viewBox="0 0 16 16"><path d="M1 1h1v14H1zM3 2h6v2h6l-2 3 1 2H8V8H3z" fill="#fff" /></svg></button>
            <button aria-label="Zasilanie"><svg width="15" height="16" viewBox="0 0 15 16" fill="none" stroke="#fff"><path d="M6 2.500H1.500v11h8M3 1h3" strokeWidth="2" /><path d="M7 5h7v4l-3 2-3-2zM9 1v4m3-4v4m-1 6v4" fill="#fff" /></svg></button>
            <button aria-label="Głośność"><svg width="15" height="14" viewBox="0 0 15 14" fill="none" stroke="#fff"><path d="M1 4h3l4-3v12l-4-3H1z" fill="#fff" /><path d="M10 4c1 2 1 4 0 6m2-8c2 3 2 7 0 10" /></svg></button>
            <Clock>10:35<br />2011-07-04</Clock>
            <ShowDesktop aria-label="Pokaż pulpit" />
          </Tray>
        </TaskBar>
      </Window>
    </>
  );
}
